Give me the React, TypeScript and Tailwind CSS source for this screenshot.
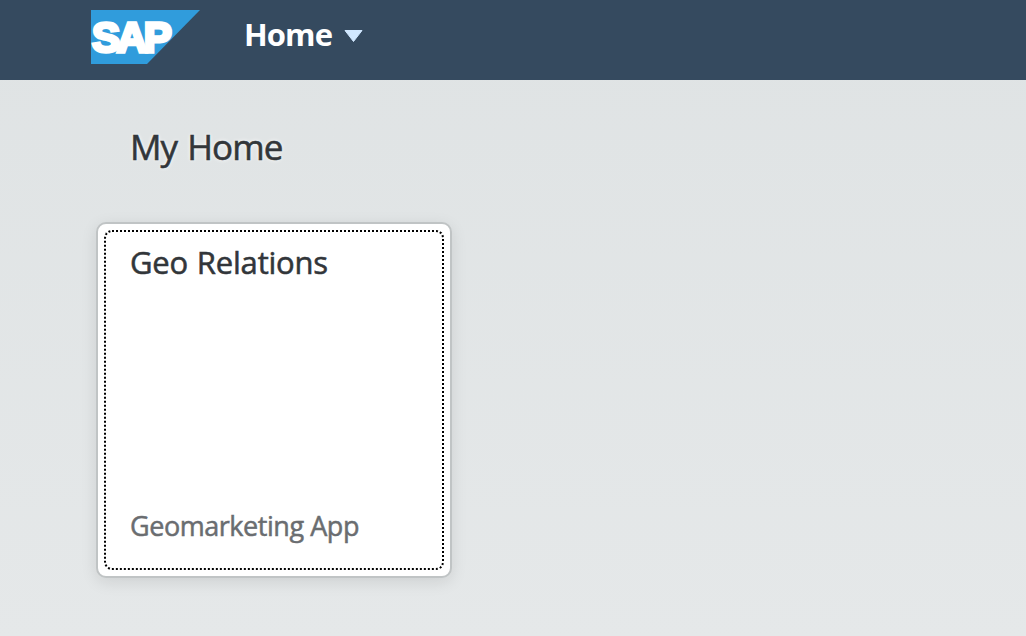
export default function App() {
  return (
    <div className="flex h-[636px] w-full flex-col bg-linear-to-b from-[#dfe3e4] to-[#e5e8e9] font-['Open_Sans',sans-serif]">
      <header className="flex h-20 shrink-0 bg-[#354a5f] pl-[91px]">
        <svg className="mt-[10px] h-[54px] w-[109px]" viewBox="0 0 109 54">
          <path d="M0 0H109L56 54H0Z" fill="#309cdc" />
          <text x="1" y="42" fill="#fff" stroke="#fff" strokeWidth="3.4" strokeLinejoin="miter" fontFamily="Liberation Sans, sans-serif" fontWeight="700" fontSize="42" letterSpacing="-3.3">SAP</text>
        </svg>
        <button className="ml-11 flex h-[68px] items-center gap-3">
          <span className="text-[31px] font-bold tracking-[-0.9px] text-white">Home</span>
          <svg className="mt-[4px] h-3 w-[19px]" viewBox="0 0 19 12"><path d="M1 0.5H18L9.5 11.5Z" fill="#d1e8ff" stroke="#d1e8ff" strokeLinejoin="round" /></svg>
        </button>
      </header>
      <main className="flex flex-col pl-24">
        <h1 className="mt-[43px] pl-[34px] text-[35px] leading-[48px] tracking-[-0.95px] [word-spacing:2px] text-[#32363a] [-webkit-text-stroke:0.55px_#32363a] [text-shadow:0_0_4px_#ffffff]">My Home</h1>
        <section className="mt-[51px] flex h-[356px] w-[356px] rounded-[10px] border-2 border-[#c0c4c5] bg-white p-[6px] shadow-[0_4px_16px_rgba(0,0,0,0.1)]">
          <div className="flex grow flex-col justify-between rounded-[8px] border-2 border-dotted border-black px-6 pt-[7px] pb-[22px]">
            <h2 className="text-[31px] leading-[46px] tracking-[-0.2px] [word-spacing:1px] text-[#32363a] [-webkit-text-stroke:0.55px_#32363a]">Geo Relations</h2>
            <p className="text-[27px] leading-[40px] tracking-[-0.45px] text-[#6a6d70] [-webkit-text-stroke:0.5px_#6a6d70]">Geomarketing App</p>
          </div>
        </section>
      </main>
    </div>
  );
}
